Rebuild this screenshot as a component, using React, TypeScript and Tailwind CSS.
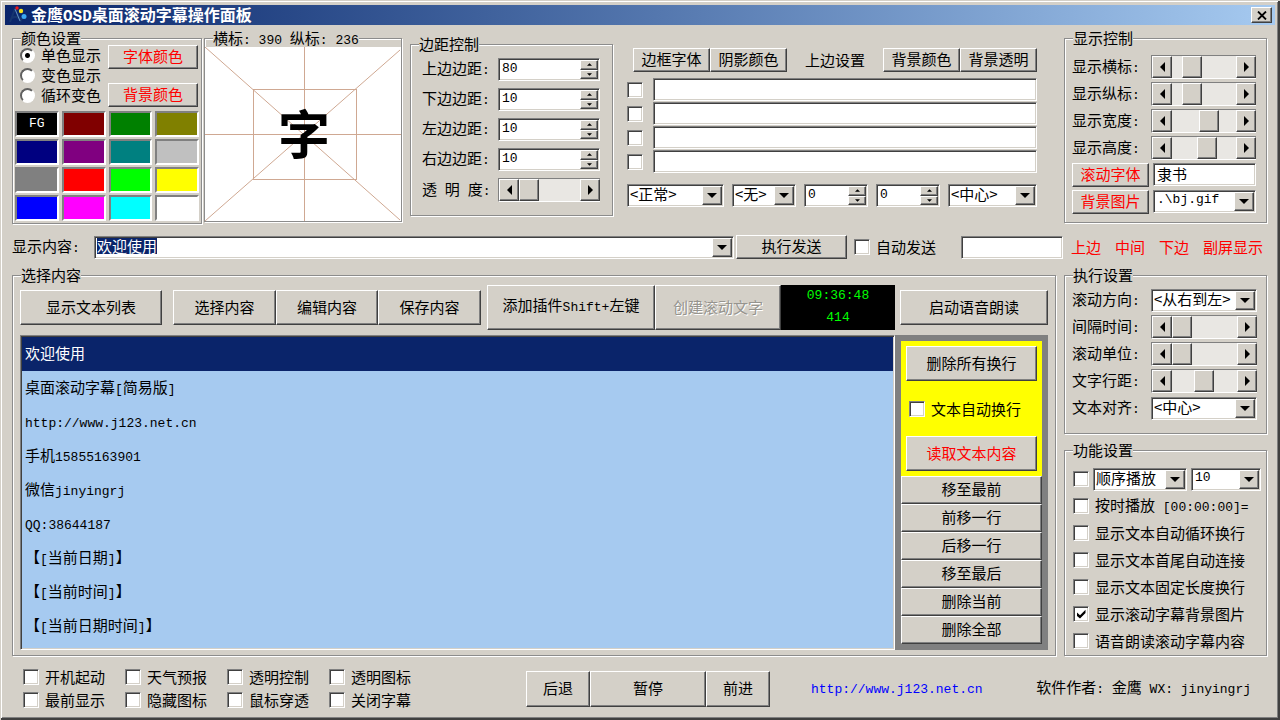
import { useEffect, useRef, useState } from 'react';
import type { ReactNode } from 'react';
import clsx from 'clsx';

const CJK = "font-['Noto_Sans_CJK_SC',sans-serif]";
const MONO = "font-['Liberation_Mono','Noto_Sans_CJK_SC',monospace]";

// classic 3D edges
const RAISED =
  'bg-[#d4d0c8] border border-t-white border-l-white border-b-[#404040] border-r-[#404040] shadow-[inset_-1px_-1px_0_#808080]';
const INSET =
  'border border-t-[#808080] border-l-[#808080] border-b-white border-r-white shadow-[inset_1px_1px_0_#404040,inset_-1px_-1px_0_#d4d0c8]';
const SUNKEN = clsx('bg-white', INSET);

const swatches = [
  '#000000', '#800000', '#008000', '#808000',
  '#000080', '#800080', '#008080', '#c0c0c0',
  '#808080', '#ff0000', '#00ff00', '#ffff00',
  '#0000ff', '#ff00ff', '#00ffff', '#ffffff',
];

const lines = [
  '欢迎使用',
  '桌面滚动字幕[简易版]',
  'http://www.j123.net.cn',
  '手机15855163901',
  '微信jinyingrj',
  'QQ:38644187',
  '【[当前日期]】',
  '【[当前时间]】',
  '【[当前日期时间]】',
];

// Latin runs are set in a narrower monospace than the Chinese text
function Txt({ children }: { children: string }) {
  return (
    <>
      {children.split(/([\x20-\x7e]+)/).map((part, i) =>
        i % 2 ? (
          <span key={i} className={clsx(MONO, 'text-[13px] whitespace-pre')}>{part}</span>
        ) : (
          part
        )
      )}
    </>
  );
}

function Group({ title, className, children }: { title: string; className?: string; children: ReactNode }) {
  return (
    <fieldset
      className={clsx(
        'min-w-0 border border-[#8c8c8c] shadow-[1px_1px_0_#fff,inset_1px_1px_0_#fff]',
        className
      )}
    >
      <legend className="ml-2 h-[14px] bg-[#d4d0c8] leading-[14px] whitespace-nowrap">
        <Txt>{title}</Txt>
      </legend>
      {children}
    </fieldset>
  );
}

function Button({ text, className, disabled }: { text: string; className?: string; disabled?: boolean }) {
  return (
    <button
      type="button"
      disabled={disabled}
      className={clsx(
        RAISED,
        'flex shrink-0 items-center justify-center pb-[2px] leading-5 whitespace-nowrap',
        disabled && 'text-[#96948e] [text-shadow:1px_1px_0_#fff]',
        className
      )}
    >
      <span><Txt>{text}</Txt></span>
    </button>
  );
}

function Arrow({ dir, small }: { dir: 'up' | 'down' | 'left' | 'right'; small?: boolean }) {
  const d = {
    up: 'M0 5L5 0L10 5Z',
    down: 'M0 0L5 5L10 0Z',
    left: 'M5 0L0 5L5 10Z',
    right: 'M0 0L5 5L0 10Z',
  }[dir];
  const upright = dir === 'up' || dir === 'down';
  return (
    <svg
      viewBox={upright ? '0 0 10 5' : '0 0 5 10'}
      className={clsx('fill-black', upright ? (small ? 'h-[3px] w-[5px]' : 'h-[5px] w-[10px]') : 'h-[10px] w-[5px]')}
    >
      <path d={d} />
    </svg>
  );
}

function Tick({ label, checked, bare }: { label: string; checked?: boolean; bare?: boolean }) {
  return (
    <label className="flex items-center gap-[6px] leading-5 whitespace-nowrap">
      <span className="grid shrink-0 place-items-center *:[grid-area:1/1]">
        <input
          type="checkbox"
          defaultChecked={checked}
          aria-label={bare ? label : undefined}
          className={clsx(SUNKEN, 'peer size-4 appearance-none')}
        />
        <svg viewBox="0 0 10 10" className="pointer-events-none hidden size-[10px] peer-checked:block">
          <path d="M1 3.5V7L4 9.5L9.5 4V0.8L4 6.2Z" />
        </svg>
      </span>
      {!bare && <span><Txt>{label}</Txt></span>}
    </label>
  );
}

function Spin({ label, value, className }: { label: string; value: string; className?: string }) {
  const [num, setNum] = useState(value);
  const step = (by: number) => setNum(String(Number(num) + by));
  return (
    <div className={clsx(SUNKEN, 'flex h-[23px] p-[1px]', className)}>
      <input
        type="text"
        aria-label={label}
        value={num}
        onChange={e => setNum(e.target.value)}
        className={clsx(MONO, 'min-w-0 flex-1 bg-transparent pb-[2px] pl-[2px] text-[13px] leading-4 outline-none')}
      />
      <div className="flex w-[18px] flex-col">
        <button type="button" aria-label="增加" onClick={() => step(1)} className={clsx(RAISED, 'flex flex-1 items-center justify-center')}>
          <Arrow dir="up" small />
        </button>
        <button type="button" aria-label="减少" onClick={() => step(-1)} className={clsx(RAISED, 'flex flex-1 items-center justify-center')}>
          <Arrow dir="down" small />
        </button>
      </div>
    </div>
  );
}

function Drop({ label, options, mono, className }: { label: string; options: string[]; mono?: boolean; className?: string }) {
  return (
    <div className={clsx('relative h-[23px]', className)}>
      <select
        aria-label={label}
        className={clsx(
          SUNKEN,
          'block size-full appearance-none pr-5 pb-[3px] leading-4 outline-none',
          mono ? [MONO, 'pl-[3px] text-[13px]'] : [CJK, 'pl-[2px] text-[15px]']
        )}
      >
        {options.map(o => <option key={o}>{o}</option>)}
      </select>
      <span className={clsx(RAISED, 'pointer-events-none absolute inset-y-[2px] right-[2px] flex w-5 items-center justify-center')}>
        <Arrow dir="down" />
      </span>
    </div>
  );
}

function Scroller({ label, value, className }: { label: string; value: number; className?: string }) {
  const arrow = clsx(RAISED, 'flex w-5 shrink-0 items-center justify-center');
  return (
    <div className={clsx('flex h-6 border-t border-b border-l border-t-[#808080] border-b-white border-l-[#808080]', className)}>
      <button type="button" aria-label={`${label}减`} className={arrow}><Arrow dir="left" /></button>
      <input
        type="range"
        aria-label={label}
        defaultValue={value}
        className="h-full min-w-0 flex-1 appearance-none bg-[#e9e7e3] [&::-webkit-slider-thumb]:h-[22px] [&::-webkit-slider-thumb]:w-5 [&::-webkit-slider-thumb]:appearance-none [&::-webkit-slider-thumb]:border [&::-webkit-slider-thumb]:border-t-white [&::-webkit-slider-thumb]:border-r-[#404040] [&::-webkit-slider-thumb]:border-b-[#404040] [&::-webkit-slider-thumb]:border-l-white [&::-webkit-slider-thumb]:bg-[#d4d0c8] [&::-webkit-slider-thumb]:shadow-[inset_-1px_-1px_0_#808080]"
      />
      <button type="button" aria-label={`${label}加`} className={arrow}><Arrow dir="right" /></button>
    </div>
  );
}

function Row({ label, children }: { label: string; children: ReactNode }) {
  return (
    <div className="flex h-6 items-center">
      <span className="w-[79px] shrink-0 leading-5"><Txt>{label}</Txt></span>
      {children}
    </div>
  );
}

function TitleBar() {
  return (
    <header className="flex h-5 items-center gap-1 bg-linear-to-r from-[#0a246a] to-[#a6caf0] pr-[3px] pl-1">
      <svg viewBox="0 0 18 18" className="size-[18px]">
        <path d="M1 16L6 3L12 16M3 12Q8 9 13 14" fill="none" stroke="#16356f" strokeWidth="2" />
        <path d="M6 3L11 15" stroke="#5f8fc4" strokeWidth="1" />
        <circle cx="8" cy="2" r="1.7" fill="#f01818" />
        <circle cx="12" cy="5" r="2.2" fill="#f7e21c" />
        <circle cx="15" cy="10.5" r="2.5" fill="#3ba7f2" />
      </svg>
      <h1 className="flex-1 text-base leading-5 font-bold text-white">
        金鹰<span className={MONO}>OSD</span>桌面滚动字幕操作面板
      </h1>
      <button type="button" aria-label="关闭" className={clsx(RAISED, 'flex h-4 w-[21px] items-center justify-center')}>
        <svg viewBox="0 0 10 9" className="h-[9px] w-[10px]">
          <path d="M1 0.5L9 8.5M9 0.5L1 8.5" stroke="#000" strokeWidth="1.8" />
        </svg>
      </button>
    </header>
  );
}

function ColorGroup() {
  return (
    <Group title="颜色设置" className="w-[190px] shrink-0">
      <div className="flex justify-between pr-[3px] pl-[7px]">
        <div>
          {['单色显示', '变色显示', '循环变色'].map((name, i) => (
            <label key={name} className="flex h-5 items-center gap-[6px] leading-4">
              <input
                type="radio"
                name="mode"
                defaultChecked={i === 0}
                className="size-[15px] appearance-none rounded-full border-2 border-t-[#606060] border-r-white border-b-white border-l-[#606060] bg-white checked:bg-[radial-gradient(#000_2px,#fff_3px)]"
              />
              {name}
            </label>
          ))}
        </div>
        <div className="flex flex-col gap-[14px]">
          <Button text="字体颜色" className="h-6 w-[90px] text-[#ff0000]" />
          <Button text="背景颜色" className="h-6 w-[90px] text-[#ff0000]" />
        </div>
      </div>
      <div className="mt-[4px] mb-[2px] grid grid-cols-4 gap-x-[3px] gap-y-[2px] px-[2px]">
        {swatches.map((color, i) => (
          <button
            key={color}
            type="button"
            aria-label={color}
            style={{ backgroundColor: color }}
            className="flex h-[26px] items-center justify-center border-2 border-t-[#808080] border-r-white border-b-white border-l-[#808080]"
          >
            {i === 0 && <span className={clsx(MONO, 'text-[13px] leading-4 text-white')}>FG</span>}
          </button>
        ))}
      </div>
    </Group>
  );
}

function PreviewGroup() {
  return (
    <Group title="横标: 390 纵标: 236" className="ml-[2px] w-[198px] shrink-0">
      <svg viewBox="0 0 196 174" className="mt-[2px] block h-[174px] w-full bg-white">
        <g fill="none" stroke="#cfa892" strokeWidth="1">
          <path d="M0 0L195 173M195 3L0 174" />
          <path d="M99.5 0V174M0 87.5H196" />
          <rect x="48.5" y="42.5" width="103" height="90" />
        </g>
        <text x="99" y="107" textAnchor="middle" fontSize="52" className={clsx(CJK, 'font-bold')}>字</text>
      </svg>
    </Group>
  );
}

function MarginGroup() {
  return (
    <Group title="边距控制" className="mt-[6px] ml-2 w-[203px] shrink-0">
      <div className="flex flex-col gap-[7px] pt-[7px] pr-3 pb-[13px] pl-[11px]">
        {[['上边边距', '80'], ['下边边距', '10'], ['左边边距', '10'], ['右边边距', '10']].map(([name, value]) => (
          <div key={name} className="flex items-center">
            <span className="w-[76px] shrink-0 leading-5"><Txt>{`${name}:`}</Txt></span>
            <Spin label={name} value={value} className="min-w-0 flex-1" />
          </div>
        ))}
        <div className="flex items-center">
          <span className="w-[76px] shrink-0 leading-5"><Txt>透 明 度:</Txt></span>
          <Scroller label="透明度" value={0} className="min-w-0 flex-1" />
        </div>
      </div>
    </Group>
  );
}

function EdgeSettings() {
  return (
    <section className="mt-[17px] ml-[14px] min-w-0 flex-1">
      <div className="flex items-center justify-between pl-[6px]">
        <div className="flex">
          <Button text="边框字体" className="h-6 w-[77px]" />
          <Button text="阴影颜色" className="h-6 w-[77px]" />
        </div>
        <span className="leading-5 whitespace-nowrap">上边设置</span>
        <div className="flex">
          <Button text="背景颜色" className="h-6 w-[77px]" />
          <Button text="背景透明" className="h-6 w-[77px]" />
        </div>
      </div>
      <div className="mt-[6px] flex flex-col gap-[1px]">
        {[1, 2, 3, 4].map(n => (
          <div key={n} className="flex h-[23px] items-center gap-[10px]">
            <Tick label={`启用第${n}行`} bare />
            <input type="text" aria-label={`第${n}行`} className={clsx(SUNKEN, 'h-full min-w-0 flex-1 px-1 outline-none')} />
          </div>
        ))}
      </div>
      <div className="mt-[11px] flex gap-2">
        <Drop label="样式" options={['<正常>']} className="w-[97px]" />
        <Drop label="特效" options={['<无>']} className="w-16" />
        <Spin label="横向偏移" value="0" className="w-16" />
        <Spin label="纵向偏移" value="0" className="w-16" />
        <Drop label="位置" options={['<中心>']} className="flex-1" />
      </div>
    </section>
  );
}

function DisplayGroup() {
  return (
    <Group title="显示控制" className="ml-[27px] w-[203px] shrink-0">
      <div className="flex flex-col gap-[3px] pt-[10px] pr-[10px] pb-2 pl-[7px]">
        {([['显示横标', 22], ['显示纵标', 22], ['显示宽度', 61], ['显示高度', 56]] as const).map(([name, value]) => (
          <Row key={name} label={`${name}:`}>
            <Scroller label={name} value={value} className="min-w-0 flex-1" />
          </Row>
        ))}
        <div className="flex gap-1">
          <Button text="滚动字体" className="h-6 w-[77px] text-[#ff0000]" />
          <input type="text" aria-label="滚动字体" defaultValue="隶书" className={clsx(SUNKEN, 'h-[23px] min-w-0 flex-1 px-[3px] pb-[3px] leading-4 outline-none')} />
        </div>
        <div className="flex gap-1">
          <Button text="背景图片" className="h-6 w-[77px] text-[#ff0000]" />
          <Drop label="背景图片" options={['.\\bj.gif']} mono className="min-w-0 flex-1" />
        </div>
      </div>
    </Group>
  );
}

function SendBar() {
  const ref = useRef<HTMLInputElement>(null);

  // the current text is ready to be overtyped
  useEffect(() => {
    ref.current?.focus();
    ref.current?.select();
  }, []);

  return (
    <div className="mt-[11px] flex h-6 items-center">
      <label htmlFor="content" className="w-[82px] shrink-0 leading-5"><Txt>显示内容:</Txt></label>
      <div className={clsx(SUNKEN, 'flex h-[23px] min-w-0 flex-1 p-[1px]')}>
        <input
          id="content"
          ref={ref}
          type="text"
          defaultValue="欢迎使用"
          className="h-4 min-w-0 flex-1 bg-transparent pl-[1px] leading-4 outline-none selection:bg-[#0a246a] selection:text-white"
        />
        <button type="button" aria-label="展开" className={clsx(RAISED, 'flex w-5 items-center justify-center')}>
          <Arrow dir="down" />
        </button>
      </div>
      <Button text="执行发送" className="ml-[2px] h-6 w-[111px]" />
      <div className="ml-[7px] shrink-0"><Tick label="自动发送" /></div>
      <input type="text" aria-label="间隔" className={clsx(SUNKEN, 'ml-[25px] h-[23px] w-[102px] shrink-0 px-1 outline-none')} />
      <nav className="ml-2 flex w-[196px] shrink-0 justify-between pr-1 leading-5 text-[#ff0000]">
        <a href="#top">上边</a>
        <a href="#middle">中间</a>
        <a href="#bottom">下边</a>
        <a href="#second">副屏显示</a>
      </nav>
    </div>
  );
}

function ContentGroup() {
  const [current, setCurrent] = useState(0);
  return (
    <Group title="选择内容" className="flex-1">
      <div className="flex items-center pt-[3px] pr-[7px] pl-[7px]">
        <Button text="显示文本列表" className="h-[35px] w-[142px]" />
        <div className="ml-[11px] flex">
          <Button text="选择内容" className="h-[35px] w-[103px]" />
          <Button text="编辑内容" className="h-[35px] w-[102px]" />
          <Button text="保存内容" className="h-[35px] w-[103px]" />
        </div>
        <div className="ml-[6px] flex flex-1">
          <Button text="添加插件Shift+左键" className="h-[45px] w-[168px]" />
          <Button text="创建滚动文字" disabled className="h-[45px] w-[126px]" />
          <div className={clsx(MONO, 'flex h-[45px] flex-1 flex-col items-center bg-black text-[13px] leading-[22px] text-[#00ff00]')}>
            <span>09:36:48</span>
            <span>414</span>
          </div>
        </div>
        <Button text="启动语音朗读" className="ml-[5px] h-[35px] w-[148px]" />
      </div>
      <div className="mt-[5px] mb-[5px] flex pr-[7px] pl-[7px]">
        <ul role="listbox" aria-label="文本列表" className={clsx(INSET, 'min-w-0 flex-1 bg-[#a6caf0] p-[1px]')}>
          {lines.map((line, i) => (
            <li
              key={line}
              role="option"
              aria-selected={i === current}
              onClick={() => setCurrent(i)}
              className={clsx('h-[34px] pl-[3px] leading-8', i === current && 'bg-[#0a246a] text-white')}
            >
              <Txt>{line}</Txt>
            </li>
          ))}
        </ul>
        <div className="w-[153px] shrink-0 bg-[#808080] p-[6px]">
          <div className="flex h-[135px] flex-col justify-between bg-[#ffff00] p-[5px]">
            <Button text="删除所有换行" className="h-[35px]" />
            <div className="pl-[3px]"><Tick label="文本自动换行" /></div>
            <Button text="读取文本内容" className="h-[35px] text-[#ff0000]" />
          </div>
          {['移至最前', '前移一行', '后移一行', '移至最后', '删除当前', '删除全部'].map(name => (
            <Button key={name} text={name} className="h-7 w-full" />
          ))}
        </div>
      </div>
    </Group>
  );
}

function SideGroups() {
  return (
    <div className="ml-2 flex w-[203px] shrink-0 flex-col justify-between">
      <Group title="执行设置">
        <div className="flex flex-col gap-[3px] pt-[6px] pr-[9px] pb-[13px] pl-[7px]">
          <Row label="滚动方向:"><Drop label="滚动方向" options={['<从右到左>']} className="min-w-0 flex-1" /></Row>
          <Row label="间隔时间:"><Scroller label="间隔时间" value={0} className="min-w-0 flex-1" /></Row>
          <Row label="滚动单位:"><Scroller label="滚动单位" value={0} className="min-w-0 flex-1" /></Row>
          <Row label="文字行距:"><Scroller label="文字行距" value={48} className="min-w-0 flex-1" /></Row>
          <Row label="文本对齐:"><Drop label="文本对齐" options={['<中心>']} className="min-w-0 flex-1" /></Row>
        </div>
      </Group>
      <Group title="功能设置">
        <div className="flex flex-col gap-[3px] pt-[10px] pr-[5px] pb-[2px] pl-2">
          <div className="flex h-6 items-center gap-1">
            <Tick label="启用播放顺序" bare />
            <Drop label="播放顺序" options={['顺序播放']} className="min-w-0 flex-1" />
            <Drop label="次数" options={['10']} mono className="w-[70px]" />
          </div>
          {['按时播放 [00:00:00]=', '显示文本自动循环换行', '显示文本首尾自动连接', '显示文本固定长度换行', '显示滚动字幕背景图片', '语音朗读滚动字幕内容'].map(name => (
            <div key={name} className="flex h-6 items-center">
              <Tick label={name} checked={name === '显示滚动字幕背景图片'} />
            </div>
          ))}
        </div>
      </Group>
    </div>
  );
}

function Footer() {
  return (
    <footer className="flex items-center pt-[11px] pb-1 pl-[11px]">
      <div className="grid shrink-0 grid-cols-[repeat(4,102px)] gap-y-[3px]">
        {['开机起动', '天气预报', '透明控制', '透明图标', '最前显示', '隐藏图标', '鼠标穿透', '关闭字幕'].map(name => (
          <Tick key={name} label={name} />
        ))}
      </div>
      <div className="ml-[95px] flex">
        <Button text="后退" className="h-9 w-16" />
        <Button text="暂停" className="h-9 w-[116px]" />
        <Button text="前进" className="h-9 w-16" />
      </div>
      <a href="http://www.j123.net.cn" className="ml-[41px] leading-5 text-[#0000ff]"><Txt>http://www.j123.net.cn</Txt></a>
      <p className="mr-4 ml-auto leading-5 whitespace-nowrap"><Txt>软件作者: 金鹰 WX: jinyingrj</Txt></p>
    </footer>
  );
}

export default function App() {
  return (
    <div
      className={clsx(
        CJK,
        'min-h-screen bg-[#d4d0c8] p-[5px] text-[15px] text-black shadow-[inset_1px_1px_0_#d4d0c8,inset_-2px_-2px_0_#404040,inset_2px_2px_0_#fff,inset_-3px_-3px_0_#808080]'
      )}
    >
      <TitleBar />
      <main className="pt-[6px] pr-2 pl-[7px]">
        <div className="flex items-start">
          <ColorGroup />
          <PreviewGroup />
          <MarginGroup />
          <EdgeSettings />
          <DisplayGroup />
        </div>
        <SendBar />
        <div className="mt-[9px] flex">
          <ContentGroup />
          <SideGroups />
        </div>
        <Footer />
      </main>
    </div>
  );
}
